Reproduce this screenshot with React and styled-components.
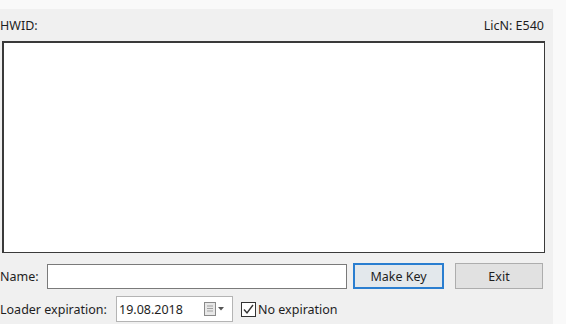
import React from 'react'
import styled, { createGlobalStyle } from 'styled-components'

const GlobalStyle = createGlobalStyle`
  html, body {
    margin: 0;
    padding: 0;
    background: #f9f9f9;
    font-family: "Noto Sans", "Liberation Sans", sans-serif;
  }
`

const Window = styled.div`
  width: 553px;
  height: 315px;
  margin-top: 9px;
  background: #f0f0f0;
  color: #1e1e1e;
  font-size: 12.5px;
  display: flex;
  flex-direction: column;
`

const Header = styled.div`
  height: 32px;
  display: flex;
  align-items: center;
  justify-content: space-between;
  padding: 0 9px 0 0;
`

const Label = styled.span`
  white-space: nowrap;
  width: ${p => p.w || 'auto'};
  flex-shrink: 0;
`

const KeyBox = styled.textarea`
  margin: 0 0 0 2px;
  width: 543px;
  height: 212px;
  box-sizing: border-box;
  border: 1px solid #3a3a3a;
  border-left-width: 2px;
  border-top-width: 2px;
  background: #fff;
  resize: none;
  outline: none;
`

const Row = styled.div`
  display: flex;
  align-items: center;
  height: 26px;
  margin-top: ${p => p.top}px;
`

const TextInput = styled.input`
  width: 300px;
  height: 25px;
  box-sizing: border-box;
  border: 1px solid #7a7a7a;
  background: #fff;
  outline: none;
  margin-right: 6px;
`

const Button = styled.button`
  width: ${p => p.w}px;
  height: 26px;
  box-sizing: border-box;
  margin-left: ${p => p.gap || 0}px;
  font: inherit;
  color: #1e1e1e;
  background: ${p => (p.primary ? '#e3e8ec' : '#e1e1e1')};
  border: ${p => (p.primary ? '2px solid #2a7ed0' : '1px solid #adadad')};
  padding: 0;
`

const DatePicker = styled.div`
  width: 117px;
  height: 26px;
  box-sizing: border-box;
  border: 1px solid #b4b4b4;
  background: #fff;
  display: flex;
  align-items: center;
  padding-left: 2px;
  margin-right: 8px;
`

const DateText = styled.span`
  flex: 1;
`

const DropIcon = styled.svg`
  margin-right: 6px;
`

const Check = styled.div`
  width: 15px;
  height: 15px;
  box-sizing: border-box;
  border: 1px solid #333;
  background: #fff;
  display: flex;
  align-items: center;
  justify-content: center;
  margin-right: 2px;
`

export default function App () {
  return (
    <>
      <GlobalStyle />
      <Window>
        <Header>
          <Label>HWID:</Label>
          <Label>LicN: E540</Label>
        </Header>
        <KeyBox />
        <Row top={10}>
          <Label w="47px">Name:</Label>
          <TextInput />
          <Button primary w={91}>Make Key</Button>
          <Button w={88} gap={11}>Exit</Button>
        </Row>
        <Row top={7}>
          <Label w="116px">Loader expiration:</Label>
          <DatePicker>
            <DateText>19.08.2018</DateText>
            <DropIcon width="22" height="14" viewBox="0 0 22 14">
              <rect x="0.5" y="0.5" width="11" height="13" fill="#e8e8e8" stroke="#8a8a8a" />
              <path d="M3 4h6M3 6.5h6M3 9h6" stroke="#a0a0a0" strokeWidth="1" />
              <path d="M14 5h6l-3 3.5z" fill="#555" />
            </DropIcon>
          </DatePicker>
          <Check>
            <svg width="13" height="13" viewBox="0 0 13 13">
              <path d="M2 6.5l3 3.5 6-8" fill="none" stroke="#333" strokeWidth="1.4" />
            </svg>
          </Check>
          <Label>No expiration</Label>
        </Row>
      </Window>
    </>
  )
}
